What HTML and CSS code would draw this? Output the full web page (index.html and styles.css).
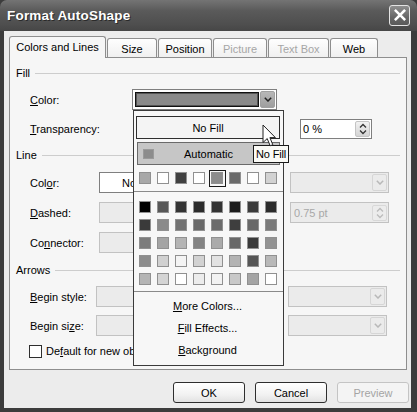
FILE: index.html
```html
<!DOCTYPE html>
<html>
<head>
<meta charset="utf-8">
<link rel="stylesheet" href="styles.css">
</head>
<body>
<div class="win">
  <div class="titlebar">
    <span class="title">Format AutoShape</span>
    <span class="close"><svg width="12" height="12" viewBox="0 0 12 12"><path d="M1.8 1.8 L10.2 10.2 M10.2 1.8 L1.8 10.2" stroke="#fff" stroke-width="2.6" stroke-linecap="square"/></svg></span>
  </div>
  <div class="client">
    <div class="tabs">
      <div class="tab active">Colors and Lines</div>
      <div class="tab">Size</div>
      <div class="tab">Position</div>
      <div class="tab disabled">Picture</div>
      <div class="tab disabled">Text Box</div>
      <div class="tab">Web</div>
    </div>
    <div class="panel">
      <div class="ghead"><span>Fill</span></div>
      <div class="fields fill">
        <div class="row">
          <span class="lbl lbl-fill"><u>C</u>olor:</span>
          <span class="combo color-combo"><span class="swatch-big"></span><span class="arrow-btn"><svg width="8" height="5" viewBox="0 0 8 5"><path d="M0.8 0.8 L4 4 L7.2 0.8" fill="none" stroke="#222" stroke-width="1.5"/></svg></span></span>
        </div>
        <div class="row">
          <span class="lbl lbl-fill"><u>T</u>ransparency:</span>
          <span class="spin trans"><span class="val">0 %</span><span class="spin-btn"><svg width="8" height="12" viewBox="0 0 8 12"><path d="M1 4.5 L4 1.5 L7 4.5 M1 7.5 L4 10.5 L7 7.5" fill="none" stroke="#333" stroke-width="1.3"/></svg></span></span>
        </div>
      </div>
      <div class="ghead"><span>Line</span></div>
      <div class="fields line">
        <div class="row">
          <span class="lbl lbl-line">Col<u>o</u>r:</span>
          <span class="box enabled-box">No Line</span>
          <span class="combo right disabled-box"><span class="arrow-btn dis"><svg width="8" height="5" viewBox="0 0 8 5"><path d="M0.8 0.8 L4 4 L7.2 0.8" fill="none" stroke="#b8b8b8" stroke-width="1.5"/></svg></span></span>
        </div>
        <div class="row">
          <span class="lbl lbl-line"><u>D</u>ashed:</span>
          <span class="box disabled-box"></span>
          <span class="spin right disabled-box"><span class="val dis-text">0.75 pt</span><span class="spin-btn dis"><svg width="8" height="12" viewBox="0 0 8 12"><path d="M1 4.5 L4 1.5 L7 4.5 M1 7.5 L4 10.5 L7 7.5" fill="none" stroke="#bbb" stroke-width="1.3"/></svg></span></span>
        </div>
        <div class="row">
          <span class="lbl lbl-line">Co<u>n</u>nector:</span>
          <span class="box disabled-box"></span>
        </div>
      </div>
      <div class="ghead"><span>Arrows</span></div>
      <div class="fields arrows">
        <div class="row">
          <span class="lbl lbl-arrow"><u>B</u>egin style:</span>
          <span class="box disabled-box"></span>
          <span class="combo right right-arrow disabled-box"><span class="arrow-btn dis"><svg width="8" height="5" viewBox="0 0 8 5"><path d="M0.8 0.8 L4 4 L7.2 0.8" fill="none" stroke="#b8b8b8" stroke-width="1.5"/></svg></span></span>
        </div>
        <div class="row">
          <span class="lbl lbl-arrow">Begin si<u>z</u>e:</span>
          <span class="box disabled-box"></span>
          <span class="combo right right-arrow disabled-box"><span class="arrow-btn dis"><svg width="8" height="5" viewBox="0 0 8 5"><path d="M0.8 0.8 L4 4 L7.2 0.8" fill="none" stroke="#b8b8b8" stroke-width="1.5"/></svg></span></span>
        </div>
        <div class="check-row">
          <span class="checkbox"></span>
          <span>De<u>f</u>ault for new object</span>
        </div>
      </div>

      <div class="popup">
        <div class="nofill">No Fill</div>
        <div class="auto"><span class="auto-sw"></span><span class="auto-text">Automatic</span></div>
        <div class="sw-row top-row">
          <span class="cell"><i style="background:#a8a8a8"></i></span>
          <span class="cell"><i style="background:#ffffff"></i></span>
          <span class="cell"><i style="background:#404040"></i></span>
          <span class="cell"><i style="background:#ffffff"></i></span>
          <span class="cell sel"><i style="background:#8c8c8c"></i></span>
          <span class="cell"><i style="background:#6a6a6a"></i></span>
          <span class="cell"><i style="background:#ffffff"></i></span>
          <span class="cell"><i style="background:#d2d2d2"></i></span>
        </div>
        <div class="sep"></div>
        <div class="sw-grid">
          <span class="cell"><i style="background:#000000"></i></span>
          <span class="cell"><i style="background:#575757"></i></span>
          <span class="cell"><i style="background:#333333"></i></span>
          <span class="cell"><i style="background:#2b2b2b"></i></span>
          <span class="cell"><i style="background:#333333"></i></span>
          <span class="cell"><i style="background:#1c1c1c"></i></span>
          <span class="cell"><i style="background:#3b3b3b"></i></span>
          <span class="cell"><i style="background:#2b2b2b"></i></span>

          <span class="cell"><i style="background:#3a3a3a"></i></span>
          <span class="cell"><i style="background:#8a8a8a"></i></span>
          <span class="cell"><i style="background:#727272"></i></span>
          <span class="cell"><i style="background:#6a6a6a"></i></span>
          <span class="cell"><i style="background:#6c6c6c"></i></span>
          <span class="cell"><i style="background:#3e3e3e"></i></span>
          <span class="cell"><i style="background:#686868"></i></span>
          <span class="cell"><i style="background:#7a7a7a"></i></span>

          <span class="cell"><i style="background:#7c7c7c"></i></span>
          <span class="cell"><i style="background:#a4a4a4"></i></span>
          <span class="cell"><i style="background:#b4b4b4"></i></span>
          <span class="cell"><i style="background:#838383"></i></span>
          <span class="cell"><i style="background:#aaaaaa"></i></span>
          <span class="cell"><i style="background:#686868"></i></span>
          <span class="cell"><i style="background:#3a3a3a"></i></span>
          <span class="cell"><i style="background:#939393"></i></span>

          <span class="cell"><i style="background:#8c8c8c"></i></span>
          <span class="cell"><i style="background:#d0d0d0"></i></span>
          <span class="cell"><i style="background:#f4f4f4"></i></span>
          <span class="cell"><i style="background:#d2d2d2"></i></span>
          <span class="cell"><i style="background:#e2e2e2"></i></span>
          <span class="cell"><i style="background:#b3b3b3"></i></span>
          <span class="cell"><i style="background:#555555"></i></span>
          <span class="cell"><i style="background:#b8b8b8"></i></span>

          <span class="cell"><i style="background:#b4b4b4"></i></span>
          <span class="cell"><i style="background:#d4d4d4"></i></span>
          <span class="cell"><i style="background:#ffffff"></i></span>
          <span class="cell"><i style="background:#ececec"></i></span>
          <span class="cell"><i style="background:#f2f2f2"></i></span>
          <span class="cell"><i style="background:#c8c8c8"></i></span>
          <span class="cell"><i style="background:#a4a4a4"></i></span>
          <span class="cell"><i style="background:#ffffff"></i></span>
        </div>
        <div class="sep sep2"></div>
        <div class="mitem"><u>M</u>ore Colors...</div>
        <div class="mitem"><u>F</u>ill Effects...</div>
        <div class="mitem"><u>B</u>ackground</div>
      </div>
      <div class="tooltip">No Fill</div>
      <svg class="cursor" width="15" height="24" viewBox="0 0 15 24"><path d="M1 1 L1 18.5 L5.2 14.6 L8.2 21.8 L10.8 20.7 L7.9 13.6 L13.4 13.6 Z" fill="#fff" stroke="#222" stroke-width="1" stroke-linejoin="miter"/></svg>
    </div>
    <div class="buttons">
      <span class="btn">OK</span>
      <span class="btn">Cancel</span>
      <span class="btn disabled">Preview</span>
    </div>
  </div>
</div>
</body>
</html>
```

FILE: styles.css
```css
* { box-sizing: border-box; }
html, body { margin: 0; padding: 0; }
body {
  width: 417px;
  height: 412px;
  overflow: hidden;
  background: #3a3a3a;
  font-family: "Liberation Sans", Arial, sans-serif;
  font-size: 11px;
  color: #000;
}
u { text-decoration: underline; text-underline-offset: 1px; }

.win {
  width: 417px;
  height: 412px;
  display: flex;
  flex-direction: column;
  background: #3c3c3c;
}

.titlebar {
  height: 31px;
  flex: none;
  display: flex;
  align-items: center;
  justify-content: space-between;
  padding: 0 7px 1px 7px;
  background: linear-gradient(#747474, #5a5a5a 35%, #4e4e4e 80%, #464646);
  border-radius: 7px 7px 0 0;
}
.title {
  color: #fff;
  font-weight: bold;
  font-size: 13.5px;
  letter-spacing: 0.2px;
  text-shadow: 1px 1px 0 #2a2a2a;
}
.close {
  width: 21px;
  height: 21px;
  border: 1px solid #e4e4e4;
  border-radius: 3px;
  background: linear-gradient(#8e8e8e, #666 60%, #5a5a5a);
  display: flex;
  align-items: center;
  justify-content: center;
}

.client {
  flex: 1;
  margin: 0 6px 4px 4px;
  background: #ececec;
  display: flex;
  flex-direction: column;
  padding: 5px 0 0 5px;
}

.tabs {
  display: grid;
  grid-template-columns: 98px 51px 55px 55px 62px 49px;
  align-items: end;
  height: 21px;
  position: relative;
  z-index: 2;
}
.tab {
  height: 19px;
  border: 1px solid #8e8e8e;
  border-bottom: none;
  border-radius: 3px 3px 0 0;
  background: linear-gradient(#fefefe, #f0f0f0);
  display: flex;
  align-items: center;
  justify-content: center;
  padding-top: 1px;
  margin-right: 1px;
}
.tab.active {
  height: 22px;
  margin-bottom: -1px;
  background: #f6f6f6;
  padding-top: 0;
  padding-bottom: 2px;
}
.tab.disabled { color: #a6a6a6; }

.panel {
  position: relative;
  width: 398px;
  height: 313px;
  border: 1px solid #8e8e8e;
  background: #f6f6f6;
  padding: 8px 6px 0 6px;
  display: flex;
  flex-direction: column;
}

.ghead {
  height: 14px;
  display: flex;
  align-items: center;
}
.ghead::after {
  content: "";
  flex: 1;
  height: 1px;
  background: #cdcdcd;
  margin-left: 5px;
}

.fields { display: flex; flex-direction: column; }
.fields.fill { margin-top: 9px; gap: 8px; margin-bottom: 9px; }
.fields.line { margin-top: 10px; gap: 9px; margin-bottom: 10px; }
.fields.arrows { margin-top: 9px; gap: 8px; }

.row {
  height: 21px;
  display: flex;
  align-items: center;
  padding-left: 14px;
}
.lbl { flex: none; }
.lbl-fill { width: 102px; }
.lbl-line { width: 69px; }
.lbl-arrow { width: 66px; }

.combo, .spin, .box {
  height: 21px;
  border: 1px solid #7f7f7f;
  background: #fff;
  display: flex;
  align-items: center;
  flex: none;
}
.color-combo {
  width: 145px;
  padding: 1px;
  gap: 1px;
}
.swatch-big {
  flex: 1;
  height: 15px;
  border: 1px solid #111;
  outline: 1px solid #555;
  outline-offset: -2px;
  background: #8a8a8a;
  margin-left: 1px;
}
.arrow-btn {
  width: 15px;
  height: 17px;
  background: linear-gradient(#b8b8b8, #9e9e9e);
  border: 1px solid #a0a0a0;
  border-radius: 2px;
  display: flex;
  align-items: center;
  justify-content: center;
  margin-left: auto;
}
.arrow-btn.dis {
  background: #ebebeb;
  border-color: #d6d6d6;
}

.trans {
  width: 72px;
  margin-left: 168px;
  height: 20px;
  padding: 1px 1px 1px 2px;
}
.val { flex: 1; }
.dis-text { color: #a8a8a8; }
.spin-btn {
  width: 15px;
  height: 16px;
  background: linear-gradient(#f2f2f2, #d4d4d4);
  border: 1px solid #c4c4c4;
  border-radius: 2px;
  display: flex;
  align-items: center;
  justify-content: center;
}
.spin-btn.dis { background: #ececec; border-color: #d8d8d8; }

.box { width: 130px; }
.enabled-box { padding-left: 22px; }
.disabled-box {
  background: #ebebeb;
  border-color: #c2c2c2;
}
.right {
  width: 99px;
  margin-left: auto;
  margin-right: 11px;
  padding: 1px 1px 1px 3px;
}
.right-arrow { margin-right: 13px; }

.check-row {
  height: 14px;
  display: flex;
  align-items: center;
  padding-left: 13px;
  gap: 4px;
}
.checkbox {
  width: 13px;
  height: 13px;
  border: 1px solid #2e2e2e;
  background: #fff;
}

.popup {
  position: absolute;
  left: 123px;
  top: 52px;
  width: 151px;
  height: 256px;
  border: 1px solid #3a3a3a;
  background: #f7f7f7;
  padding: 5px 3px 0 2px;
  z-index: 5;
  display: flex;
  flex-direction: column;
}
.nofill {
  height: 23px;
  border: 1px solid #2e2e2e;
  background: #f4f4f4;
  display: flex;
  align-items: center;
  justify-content: center;
  margin-left: 0;
}
.auto {
  height: 23px;
  margin-top: 3px;
  margin-left: 1px;
  border: 1px solid #6a6a6a;
  background: #c6c6c6;
  display: flex;
  align-items: center;
  padding-left: 5px;
}
.auto-sw {
  width: 11px;
  height: 10px;
  background: #8c8c8c;
  border: 1px solid #9a9a9a;
}
.auto-text { flex: 1; text-align: center; padding-right: 16px; }

.sw-row, .sw-grid {
  display: grid;
  grid-template-columns: repeat(8, 18px);
  grid-auto-rows: 18px;
}
.top-row { margin-top: 4px; }
.cell {
  display: flex;
  align-items: center;
  justify-content: center;
}
.cell i {
  display: block;
  width: 12px;
  height: 12px;
  border: 1px solid #909090;
}
.cell.sel {
  border: 1px solid #1a1a1a;
  margin: 1px 0 0 1px;
}
.cell.sel i { margin: -1px 0 0 -1px; }

.sep {
  height: 1px;
  background: #8a8a8a;
  margin: 4px -3px 6px -2px;
}
.sep2 { margin: 3px -3px 3px -2px; }

.mitem {
  height: 22px;
  display: flex;
  align-items: center;
  justify-content: center;
  padding-right: 1px;
}

.tooltip {
  position: absolute;
  left: 243px;
  top: 87px;
  width: 36px;
  height: 18px;
  padding: 0 1px;
  border: 1px solid #1a1a1a;
  background: #fafaf6;
  z-index: 6;
  font-size: 11px;
  line-height: 16px;
  letter-spacing: -0.2px;
  text-align: center;
  white-space: nowrap;
}
.cursor {
  position: absolute;
  left: 252px;
  top: 66px;
  z-index: 7;
}

.buttons {
  display: flex;
  justify-content: flex-end;
  gap: 10px;
  margin-top: 12px;
  padding-right: 2px;
}
.btn {
  width: 72px;
  height: 21px;
  border: 1px solid #2e2e2e;
  border-radius: 3px;
  background: linear-gradient(#ffffff, #f2f2f2 60%, #e2e2e2);
  display: flex;
  align-items: center;
  justify-content: center;
}
.btn.disabled {
  border-color: #c4c4c4;
  color: #a4a4a4;
  background: #f4f4f4;
}
```
